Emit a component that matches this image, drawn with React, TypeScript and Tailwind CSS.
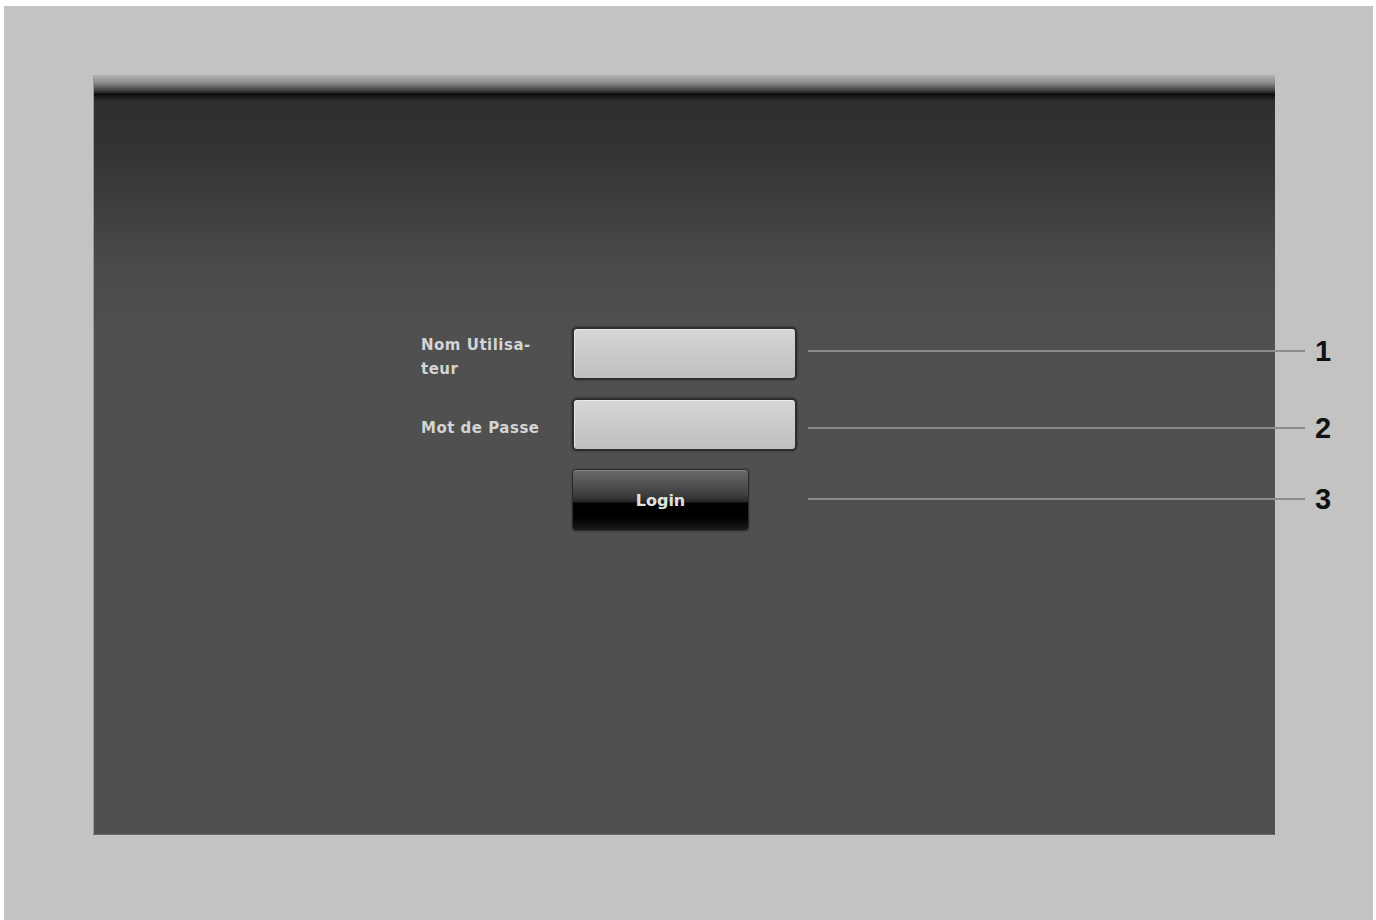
const callouts = [
  { n: '1', top: 'top-[330px]' },
  { n: '2', top: 'top-[407px]' },
  { n: '3', top: 'top-[478px]' },
];

const LoginField = () => (
  <div className="h-[53px] w-[225px] rounded-[5px] border-2 border-[#2e2e2e] bg-gradient-to-b from-[#d6d6d6] to-[#bfbfbf] shadow-[inset_1px_1px_0_#e8e8e8,0_0_2px_#222]" />
);

const App = () => {
  return (
    <div className="h-[920px] w-[1376px] overflow-hidden bg-white pl-[4px] pr-[3px] pt-[6px] font-['DejaVu_Sans',sans-serif]">
      <div className="relative h-full bg-[#c3c3c3] pl-[89px] pt-[69px]">
        <div className="flex h-[759px] w-[1182px] flex-col border-l border-[#9a9a9a] shadow-[0_1px_0_#6a6a6a]">
          <div className="h-[20px] bg-[linear-gradient(to_bottom,#b4b4b4_0%,#8a8a8a_40%,#3a3a3a_80%,#000_100%)]" />
          <div className="flex-1 bg-[linear-gradient(to_bottom,#121212_0px,#2e2e2e_6px,#343434_60px,#4a4a4a_170px,#505050_240px,#505050_100%)]">
            <div className="ml-[327px] mt-[232px] grid grid-cols-[151px_225px] gap-y-[18px]">
              <div className="h-[53px] pt-[6px] text-[15px] font-bold leading-[24px] tracking-[0.5px] text-[#d4d4d4]">
                Nom Utilisa-
                <br />
                teur
              </div>
              <LoginField />

              <div className="flex items-center pt-[8px] text-[15px] font-bold tracking-[0.5px] text-[#d4d4d4]">
                Mot de Passe
              </div>
              <LoginField />

              <div />
              <button className="flex h-[62px] w-[177px] items-center justify-center rounded-[4px] border border-[#2a2a2a] bg-[linear-gradient(to_bottom,#6a6a6a_0%,#404040_40%,#2a2a2a_52%,#000_56%,#000_80%,#1c1c1c_100%)] pt-[2px] text-[16px] font-bold text-[#e0e0e0] shadow-[inset_0_1px_0_#8a8a8a,0_0_2px_#333]">
                Login
              </button>
            </div>
          </div>
        </div>

        {callouts.map((c) => (
          <div key={c.n} className={`absolute left-[804px] ${c.top} flex h-[30px] items-center`}>
            <div className="h-[2px] w-[497px] bg-[#8c8c8c]" />
            <span className="ml-[10px] font-['Liberation_Sans',sans-serif] text-[29px] font-bold leading-none text-[#111]">
              {c.n}
            </span>
          </div>
        ))}
      </div>
    </div>
  );
};

export default App;
